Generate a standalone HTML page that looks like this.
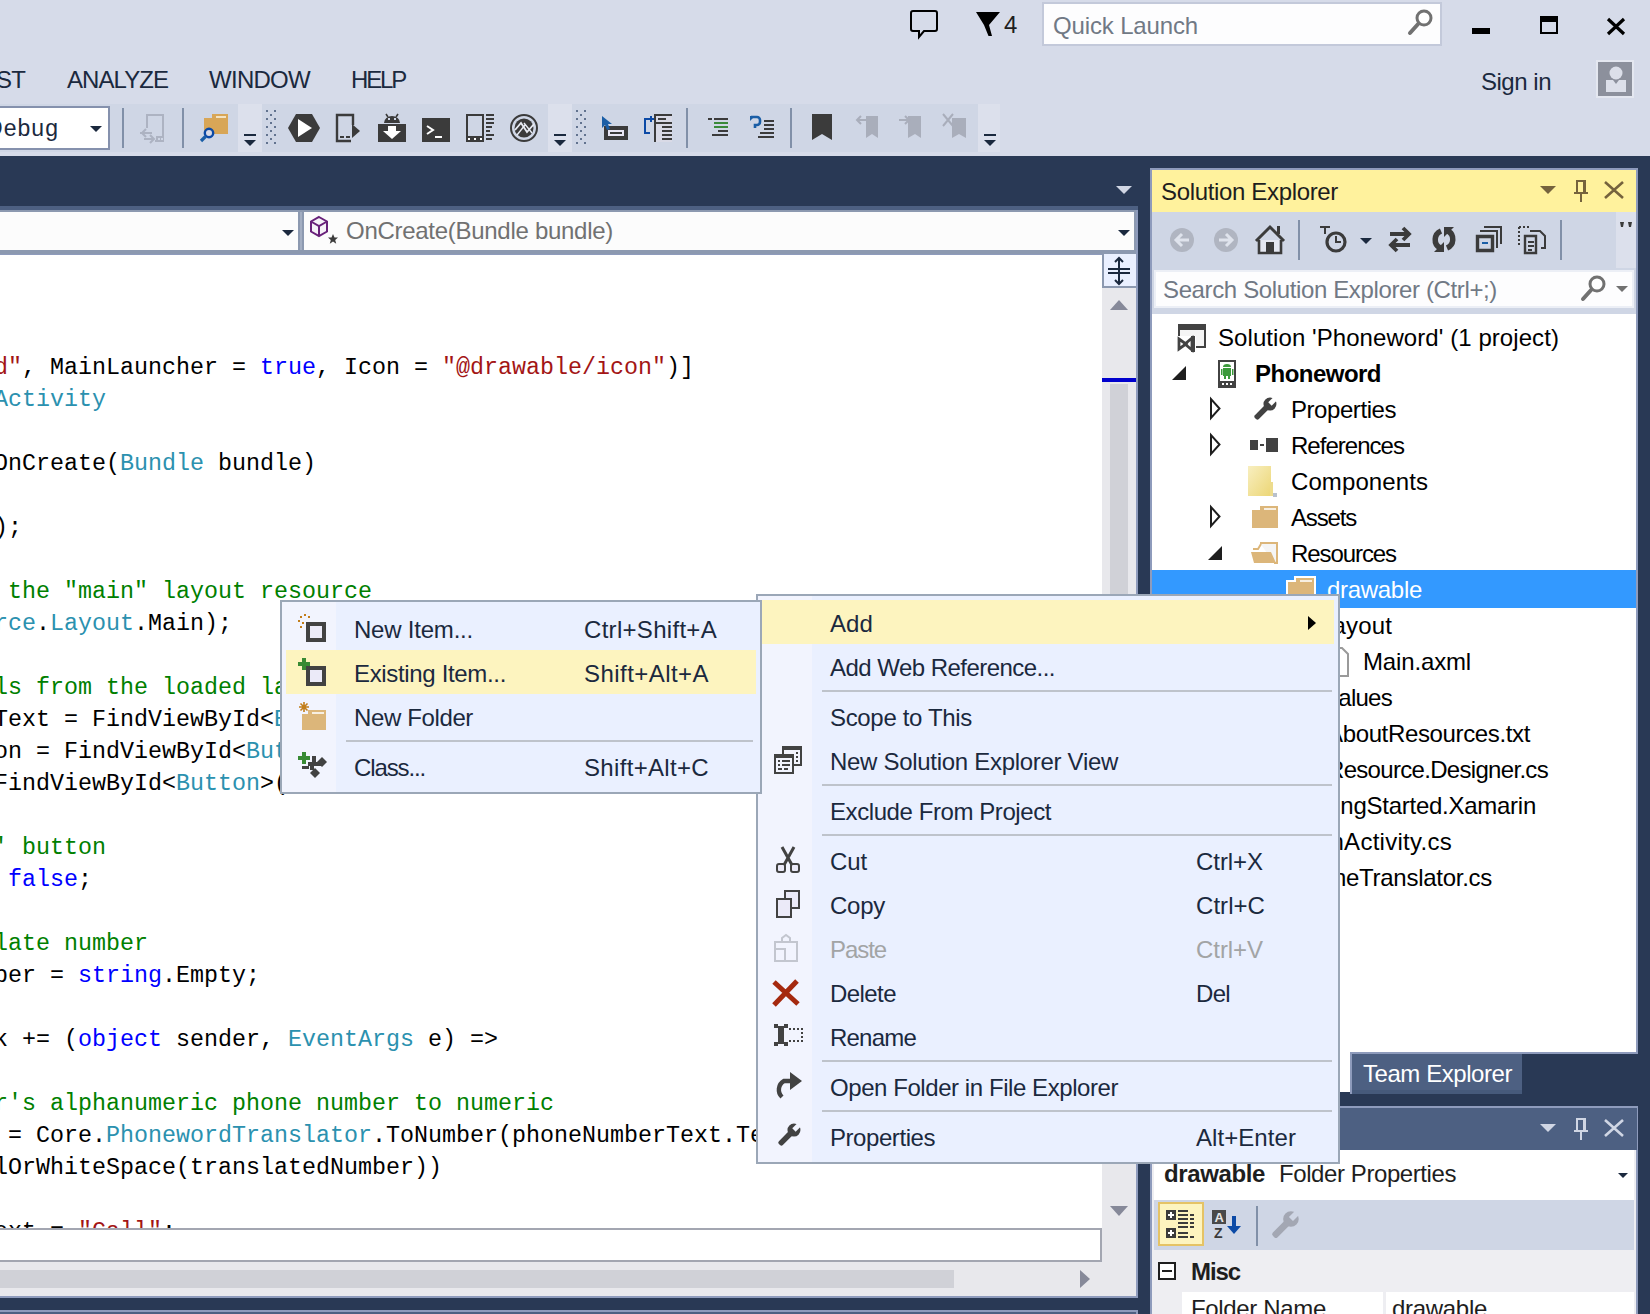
<!DOCTYPE html>
<html><head><meta charset="utf-8"><title>Visual Studio</title>
<style>
html,body{margin:0;padding:0;}
body{width:1650px;height:1314px;overflow:hidden;position:relative;background:#d6dbe9;font-family:"Liberation Sans",sans-serif;}
body>div,body>svg,body>span,body>pre{position:absolute;}
.t{white-space:pre;line-height:1;}
.c{margin:0;font-family:"Liberation Mono",monospace;font-size:23.33px;line-height:32px;color:#000;white-space:pre;}
.c i{font-style:normal;}
.k{color:#0000ff}.y{color:#2b91af}.g{color:#008000}.r{color:#a31515}
</style></head><body>
<div style="left:1042px;top:2px;width:400px;height:44px;background:#fdfdfe;border:2px solid #c3c9da;box-sizing:border-box;"></div>
<span class="t" style="left:1053px;top:13.68px;font-size:24px;color:#717985;letter-spacing:-0.147px;">Quick Launch</span>
<span class="t" style="left:-4px;top:67.68px;font-size:24px;color:#1b293e;letter-spacing:-0.836px;">ST</span>
<span class="t" style="left:67px;top:67.68px;font-size:24px;color:#1b293e;letter-spacing:-0.942px;">ANALYZE</span>
<span class="t" style="left:209px;top:67.68px;font-size:24px;color:#1b293e;letter-spacing:-0.719px;">WINDOW</span>
<span class="t" style="left:351px;top:67.68px;font-size:24px;color:#1b293e;letter-spacing:-2.176px;">HELP</span>
<span class="t" style="left:1481px;top:69.68px;font-size:24px;color:#1b293e;letter-spacing:-0.484px;">Sign in</span>
<div style="left:1597px;top:62px;width:37px;height:36px;background:#9a9ca6;"></div>
<div style="left:0px;top:104px;width:238px;height:48px;background:#cfd6e5;"></div>
<div style="left:238px;top:104px;width:24px;height:48px;background:#dce0ec;"></div>
<div style="left:262px;top:104px;width:286px;height:48px;background:#cfd6e5;"></div>
<div style="left:548px;top:104px;width:24px;height:48px;background:#dce0ec;"></div>
<div style="left:572px;top:104px;width:406px;height:48px;background:#cfd6e5;"></div>
<div style="left:978px;top:104px;width:22px;height:48px;background:#dce0ec;"></div>
<div style="left:-4px;top:106px;width:114px;height:44px;background:#ffffff;border:2px solid #8591ad;box-sizing:border-box;"></div>
<span class="t" style="left:-14px;top:116.53px;font-size:23px;color:#1b293e;letter-spacing:1.044px;">Debug</span>
<div style="left:122px;top:108px;width:2px;height:40px;background:#8190a8;"></div>
<div style="left:182px;top:108px;width:2px;height:40px;background:#8190a8;"></div>
<div style="left:686px;top:108px;width:2px;height:40px;background:#8190a8;"></div>
<div style="left:790px;top:108px;width:2px;height:40px;background:#8190a8;"></div>
<div style="left:0px;top:156px;width:1650px;height:1158px;background:#293955;"></div>
<div style="left:0px;top:206px;width:1138px;height:4px;background:#4d6082;"></div>
<div style="left:0px;top:210px;width:1138px;height:1088px;background:#8e9bbc;"></div>
<div style="left:0px;top:210px;width:1136px;height:44px;background:#8c99b0;"></div>
<div style="left:0px;top:212px;width:298px;height:38px;background:#fcfcfc;"></div>
<div style="left:304px;top:212px;width:830px;height:38px;background:#fcfcfc;"></div>
<div style="left:300px;top:212px;width:2px;height:38px;background:#a3aec2;"></div>
<div style="left:0px;top:255px;width:1102px;height:974px;background:#ffffff;"></div>
<pre class="c" style="left:-6px;top:352px;width:1108px;height:877px;overflow:hidden;"><i class="r">d"</i>, MainLauncher = <i class="k">true</i>, Icon = <i class="r">"@drawable/icon"</i>)]
<i class="y">Activity</i>

OnCreate(<i class="y">Bundle</i> bundle)

);

<i class="g"> the "main" layout resource</i>
<i class="y">rce</i>.<i class="y">Layout</i>.Main);

<i class="g">ls from the loaded layout</i>
Text = FindViewById&lt;<i class="y">EditText</i>
on = FindViewById&lt;<i class="y">Button</i>
FindViewById&lt;<i class="y">Button</i>&gt;(

<i class="g">' button</i>
 <i class="k">false</i>;

<i class="g">late number</i>
ber = <i class="k">string</i>.Empty;

k += (<i class="k">object</i> sender, <i class="y">EventArgs</i> e) =&gt;

<i class="g">r's alphanumeric phone number to numeric</i>
 = Core.<i class="y">PhonewordTranslator</i>.ToNumber(phoneNumberText.Te
lOrWhiteSpace(translatedNumber))

ext = <i class="r">"Call"</i>;
</pre>
<div style="left:1102px;top:255px;width:34px;height:974px;background:#e8e8ec;"></div>
<div style="left:1102px;top:254px;width:34px;height:34px;background:#8c99b0;"></div>
<div style="left:1104px;top:254px;width:32px;height:32px;background:#eaf0ff;"></div>
<div style="left:1102px;top:378px;width:34px;height:4px;background:#0000cd;"></div>
<div style="left:1110px;top:384px;width:18px;height:520px;background:#d0d1d7;"></div>
<div style="left:0px;top:1228px;width:1102px;height:34px;background:#ffffff;border:2px solid #a3a6b1;border-left:none;box-sizing:border-box;"></div>
<div style="left:1102px;top:1228px;width:34px;height:68px;background:#e8e8ec;"></div>
<div style="left:0px;top:1262px;width:1102px;height:34px;background:#e8e8ec;"></div>
<div style="left:0px;top:1270px;width:954px;height:18px;background:#d0d1d7;"></div>
<div style="left:0px;top:1296px;width:1138px;height:2px;background:#8e9bbc;"></div>
<div style="left:0px;top:1310px;width:1138px;height:4px;background:#8e9bbc;"></div>
<div style="left:0px;top:1312px;width:1136px;height:2px;background:#4d6082;"></div>
<div style="left:1150px;top:168px;width:488px;height:886px;background:#8e9bbc;"></div>
<div style="left:1152px;top:170px;width:484px;height:42px;background:#fff29d;"></div>
<span class="t" style="left:1161px;top:179.68px;font-size:24px;color:#1e1e1e;letter-spacing:-0.339px;">Solution Explorer</span>
<div style="left:1152px;top:212px;width:484px;height:102px;background:#cfd6e5;"></div>
<div style="left:1154px;top:270px;width:480px;height:38px;background:#fdfdfe;border:2px solid #eceff6;box-sizing:border-box;"></div>
<span class="t" style="left:1163px;top:277.68px;font-size:24px;color:#717985;letter-spacing:-0.368px;">Search Solution Explorer (Ctrl+;)</span>
<div style="left:1152px;top:314px;width:484px;height:738px;background:#ffffff;"></div>
<div style="left:1152px;top:570px;width:484px;height:38px;background:#3399ff;"></div>
<span class="t" style="left:1218px;top:325.68px;font-size:24px;color:#000000;letter-spacing:0.072px;">Solution &#x27;Phoneword&#x27; (1 project)</span>
<span class="t" style="left:1255px;top:361.68px;font-size:24px;color:#000000;font-weight:bold;letter-spacing:-0.519px;">Phoneword</span>
<span class="t" style="left:1291px;top:397.68px;font-size:24px;color:#000000;letter-spacing:-0.439px;">Properties</span>
<span class="t" style="left:1291px;top:433.68px;font-size:24px;color:#000000;letter-spacing:-0.973px;">References</span>
<span class="t" style="left:1291px;top:469.68px;font-size:24px;color:#000000;letter-spacing:0.092px;">Components</span>
<span class="t" style="left:1291px;top:505.68px;font-size:24px;color:#000000;letter-spacing:-1.172px;">Assets</span>
<span class="t" style="left:1291px;top:541.68px;font-size:24px;color:#000000;letter-spacing:-1.080px;">Resources</span>
<span class="t" style="left:1327px;top:577.68px;font-size:24px;color:#ffffff;letter-spacing:-0.301px;">drawable</span>
<span class="t" style="left:1327px;top:613.68px;font-size:24px;color:#000000;letter-spacing:0.159px;">layout</span>
<span class="t" style="left:1363px;top:649.68px;font-size:24px;color:#000000;letter-spacing:-0.151px;">Main.axml</span>
<span class="t" style="left:1327px;top:685.68px;font-size:24px;color:#000000;letter-spacing:-0.729px;">values</span>
<span class="t" style="left:1327px;top:721.68px;font-size:24px;color:#000000;letter-spacing:-0.358px;">AboutResources.txt</span>
<span class="t" style="left:1327px;top:757.68px;font-size:24px;color:#000000;letter-spacing:-0.689px;">Resource.Designer.cs</span>
<span class="t" style="left:1291px;top:793.68px;font-size:24px;color:#000000;letter-spacing:-0.263px;">GettingStarted.Xamarin</span>
<span class="t" style="left:1291px;top:829.68px;font-size:24px;color:#000000;letter-spacing:0.272px;">MainActivity.cs</span>
<span class="t" style="left:1291px;top:865.68px;font-size:24px;color:#000000;letter-spacing:-0.272px;">PhoneTranslator.cs</span>
<div style="left:1152px;top:1052px;width:198px;height:40px;background:#ffffff;"></div>
<div style="left:1350px;top:1052px;width:2px;height:42px;background:#8e9bbc;"></div>
<div style="left:1352px;top:1054px;width:170px;height:40px;background:#4d6082;"></div>
<div style="left:1352px;top:1090px;width:170px;height:4px;background:#465a7b;"></div>
<span class="t" style="left:1363px;top:1061.68px;font-size:24px;color:#ffffff;letter-spacing:-0.441px;">Team Explorer</span>
<div style="left:1150px;top:1106px;width:488px;height:210px;background:#8e9bbc;"></div>
<div style="left:1152px;top:1108px;width:485px;height:42px;background:#4d6082;"></div>
<div style="left:1152px;top:1150px;width:484px;height:164px;background:#eeeef2;"></div>
<div style="left:1154px;top:1150px;width:480px;height:50px;background:#ffffff;"></div>
<span class="t" style="left:1164px;top:1161.68px;font-size:24px;color:#1e1e1e;font-weight:bold;letter-spacing:-0.381px;">drawable</span>
<span class="t" style="left:1279px;top:1161.68px;font-size:24px;color:#1e1e1e;letter-spacing:-0.416px;">Folder Properties</span>
<div style="left:1154px;top:1200px;width:480px;height:50px;background:#cfd6e5;"></div>
<div style="left:1158px;top:1202px;width:46px;height:44px;background:#fdf4bf;border:2px solid #e5c365;box-sizing:border-box;"></div>
<div style="left:1256px;top:1206px;width:2px;height:40px;background:#8190a8;"></div>
<div style="left:1158px;top:1262px;width:18px;height:18px;background:#ffffff;border:2px solid #1e1e1e;box-sizing:border-box;"></div>
<div style="left:1162px;top:1270px;width:10px;height:2px;background:#1e1e1e;"></div>
<span class="t" style="left:1191px;top:1259.68px;font-size:24px;color:#1e1e1e;font-weight:bold;letter-spacing:-1.090px;">Misc</span>
<div style="left:1182px;top:1292px;width:201px;height:22px;background:#ffffff;"></div>
<div style="left:1386px;top:1292px;width:248px;height:22px;background:#ffffff;"></div>
<span class="t" style="left:1191px;top:1296.68px;font-size:24px;color:#1e1e1e;letter-spacing:-0.338px;">Folder Name</span>
<span class="t" style="left:1392px;top:1296.68px;font-size:24px;color:#1e1e1e;letter-spacing:-0.301px;">drawable</span>
<div style="left:756px;top:594px;width:584px;height:570px;background:#eaf0ff;z-index:10;border:2px solid #9ba7b7;box-sizing:border-box;"></div>
<div style="left:758px;top:596px;width:54px;height:566px;background:#f2f4fe;z-index:10;"></div>
<div style="left:762px;top:600px;width:572px;height:44px;background:#fdf4bf;z-index:10;"></div>
<span class="t" style="left:830px;top:611.68px;font-size:24px;color:#1b293e;letter-spacing:0.099px;z-index:10;">Add</span>
<span class="t" style="left:830px;top:655.68px;font-size:24px;color:#1b293e;letter-spacing:-0.534px;z-index:10;">Add Web Reference...</span>
<span class="t" style="left:830px;top:705.68px;font-size:24px;color:#1b293e;letter-spacing:-0.332px;z-index:10;">Scope to This</span>
<span class="t" style="left:830px;top:749.68px;font-size:24px;color:#1b293e;letter-spacing:-0.296px;z-index:10;">New Solution Explorer View</span>
<span class="t" style="left:830px;top:799.68px;font-size:24px;color:#1b293e;letter-spacing:-0.420px;z-index:10;">Exclude From Project</span>
<span class="t" style="left:830px;top:849.68px;font-size:24px;color:#1b293e;letter-spacing:-0.120px;z-index:10;">Cut</span>
<span class="t" style="left:1196px;top:849.68px;font-size:24px;color:#1b293e;letter-spacing:-0.060px;z-index:10;">Ctrl+X</span>
<span class="t" style="left:830px;top:893.68px;font-size:24px;color:#1b293e;letter-spacing:-0.258px;z-index:10;">Copy</span>
<span class="t" style="left:1196px;top:893.68px;font-size:24px;color:#1b293e;letter-spacing:0.055px;z-index:10;">Ctrl+C</span>
<span class="t" style="left:830px;top:937.68px;font-size:24px;color:#a2a4a5;letter-spacing:-1.075px;z-index:10;">Paste</span>
<span class="t" style="left:1196px;top:937.68px;font-size:24px;color:#a2a4a5;letter-spacing:-0.060px;z-index:10;">Ctrl+V</span>
<span class="t" style="left:830px;top:981.68px;font-size:24px;color:#1b293e;letter-spacing:-0.562px;z-index:10;">Delete</span>
<span class="t" style="left:1196px;top:981.68px;font-size:24px;color:#1b293e;letter-spacing:-0.672px;z-index:10;">Del</span>
<span class="t" style="left:830px;top:1025.68px;font-size:24px;color:#1b293e;letter-spacing:-0.786px;z-index:10;">Rename</span>
<span class="t" style="left:830px;top:1075.68px;font-size:24px;color:#1b293e;letter-spacing:-0.434px;z-index:10;">Open Folder in File Explorer</span>
<span class="t" style="left:830px;top:1125.68px;font-size:24px;color:#1b293e;letter-spacing:-0.439px;z-index:10;">Properties</span>
<span class="t" style="left:1196px;top:1125.68px;font-size:24px;color:#1b293e;letter-spacing:0.068px;z-index:10;">Alt+Enter</span>
<div style="left:822px;top:690px;width:510px;height:2px;background:#bec3cb;z-index:10;"></div>
<div style="left:822px;top:784px;width:510px;height:2px;background:#bec3cb;z-index:10;"></div>
<div style="left:822px;top:834px;width:510px;height:2px;background:#bec3cb;z-index:10;"></div>
<div style="left:822px;top:1060px;width:510px;height:2px;background:#bec3cb;z-index:10;"></div>
<div style="left:822px;top:1110px;width:510px;height:2px;background:#bec3cb;z-index:10;"></div>
<svg style="left:1308px;top:616px;z-index:10;" width="8" height="14" viewBox="0 0 8 14"><path d="M0 0L8 7L0 14Z" fill="#000"/></svg>
<div style="left:280px;top:600px;width:482px;height:194px;background:#eaf0ff;z-index:20;border:2px solid #9ba7b7;box-sizing:border-box;"></div>
<div style="left:282px;top:602px;width:54px;height:190px;background:#f2f4fe;z-index:20;"></div>
<div style="left:286px;top:650px;width:470px;height:44px;background:#fdf4bf;z-index:20;"></div>
<span class="t" style="left:354px;top:617.68px;font-size:24px;color:#1b293e;letter-spacing:-0.214px;z-index:20;">New Item...</span>
<span class="t" style="left:584px;top:617.68px;font-size:24px;color:#1b293e;letter-spacing:0.301px;z-index:20;">Ctrl+Shift+A</span>
<span class="t" style="left:354px;top:661.68px;font-size:24px;color:#1b293e;letter-spacing:-0.337px;z-index:20;">Existing Item...</span>
<span class="t" style="left:584px;top:661.68px;font-size:24px;color:#1b293e;letter-spacing:0.447px;z-index:20;">Shift+Alt+A</span>
<span class="t" style="left:354px;top:705.68px;font-size:24px;color:#1b293e;letter-spacing:-0.372px;z-index:20;">New Folder</span>
<span class="t" style="left:354px;top:755.68px;font-size:24px;color:#1b293e;letter-spacing:-1.127px;z-index:20;">Class...</span>
<span class="t" style="left:584px;top:755.68px;font-size:24px;color:#1b293e;letter-spacing:0.327px;z-index:20;">Shift+Alt+C</span>
<div style="left:346px;top:740px;width:407px;height:2px;background:#bec3cb;z-index:20;"></div>
<span class="t" style="left:1004px;top:13.18px;font-size:24px;color:#1e1e1e;">4</span>
<span class="t" style="left:346px;top:218.68px;font-size:24px;color:#717171;letter-spacing:-0.283px;">OnCreate(Bundle bundle)</span>
<div style="left:1616px;top:212px;width:20px;height:56px;background:#dce0ec;"></div>
<svg style="left:0px;top:0px;pointer-events:none;" width="1650" height="1314" viewBox="0 0 1650 1314"><path d="M913 11h22a2 2 0 0 1 2 2v16a2 2 0 0 1 -2 2h-11l-5 6v-6h-6a2 2 0 0 1 -2 -2v-16a2 2 0 0 1 2 -2z" fill="none" stroke="#000" stroke-width="2" /><path d="M976 12h24l-11 13l3 11h-3.5l-4.5 -11z" fill="#000" /><path d="M1410 33l9 -10" fill="none" stroke="#717171" stroke-width="4" stroke-linecap="round"/><circle cx="1424" cy="18" r="7" fill="#fff" stroke="#717171" stroke-width="3"/><rect x="1472" y="28" width="18" height="6" fill="#000"/><rect x="1540" y="16" width="18" height="18" fill="#000"/><rect x="1542" y="22" width="14" height="10" fill="#d6dbe9"/><path d="M1608 19l16 15M1624 19l-16 15" fill="none" stroke="#000" stroke-width="3.2" /><rect x="1596" y="60" width="38" height="38" fill="#e4e7f0"/><rect x="1598" y="62" width="34" height="34" fill="#8c909c"/><circle cx="1616" cy="73" r="6.5" fill="#dcdfe9"/><path d="M1606 80h7l3 4l3 -4h7v12h-20z" fill="#dcdfe9" /><path d="M90 126h12l-6 6z" fill="#1b293e" /><path d="M147 128v-13h16v26h-8" fill="none" stroke="#adb3c2" stroke-width="2" /><rect x="156" y="136" width="8" height="6" fill="#adb3c2"/><rect x="158" y="138" width="2" height="2" fill="#cfd6e5"/><rect x="161" y="138" width="2" height="2" fill="#cfd6e5"/><rect x="140" y="132" width="12" height="2" fill="#adb3c2"/><path d="M146 129l-4 4l4 4" fill="none" stroke="#adb3c2" stroke-width="2" /><rect x="144" y="138" width="10" height="2" fill="#adb3c2"/><path d="M150 135l4 4l-4 4" fill="none" stroke="#adb3c2" stroke-width="2" /><rect x="204" y="118" width="24" height="16" fill="#d8a657"/><rect x="212" y="114" width="16" height="5" fill="#d8a657"/><rect x="216" y="116" width="10" height="2" fill="#f3e3c4"/><circle cx="209" cy="133" r="4.2" fill="#d9dae6" stroke="#0c4aa6" stroke-width="2.4"/><path d="M205.5 136.5l-4.5 4.5" fill="none" stroke="#1a5ea6" stroke-width="3.2" /><rect x="244" y="134" width="12" height="2" fill="#1b293e"/><path d="M244 140h12l-6 6z" fill="#1b293e" /><rect x="554" y="134" width="12" height="2" fill="#1b293e"/><path d="M554 140h12l-6 6z" fill="#1b293e" /><rect x="984" y="134" width="12" height="2" fill="#1b293e"/><path d="M984 140h12l-6 6z" fill="#1b293e" /><rect x="266" y="110" width="2" height="2" fill="#62738f"/><rect x="274" y="110" width="2" height="2" fill="#62738f"/><rect x="270" y="114" width="2" height="2" fill="#62738f"/><rect x="266" y="118" width="2" height="2" fill="#62738f"/><rect x="274" y="118" width="2" height="2" fill="#62738f"/><rect x="270" y="122" width="2" height="2" fill="#62738f"/><rect x="266" y="126" width="2" height="2" fill="#62738f"/><rect x="274" y="126" width="2" height="2" fill="#62738f"/><rect x="270" y="130" width="2" height="2" fill="#62738f"/><rect x="266" y="134" width="2" height="2" fill="#62738f"/><rect x="274" y="134" width="2" height="2" fill="#62738f"/><rect x="270" y="138" width="2" height="2" fill="#62738f"/><rect x="266" y="142" width="2" height="2" fill="#62738f"/><rect x="274" y="142" width="2" height="2" fill="#62738f"/><rect x="576" y="110" width="2" height="2" fill="#62738f"/><rect x="584" y="110" width="2" height="2" fill="#62738f"/><rect x="580" y="114" width="2" height="2" fill="#62738f"/><rect x="576" y="118" width="2" height="2" fill="#62738f"/><rect x="584" y="118" width="2" height="2" fill="#62738f"/><rect x="580" y="122" width="2" height="2" fill="#62738f"/><rect x="576" y="126" width="2" height="2" fill="#62738f"/><rect x="584" y="126" width="2" height="2" fill="#62738f"/><rect x="580" y="130" width="2" height="2" fill="#62738f"/><rect x="576" y="134" width="2" height="2" fill="#62738f"/><rect x="584" y="134" width="2" height="2" fill="#62738f"/><rect x="580" y="138" width="2" height="2" fill="#62738f"/><rect x="576" y="142" width="2" height="2" fill="#62738f"/><rect x="584" y="142" width="2" height="2" fill="#62738f"/><path d="M288 128l8 -14h16l8 14l-8 14h-16z" fill="#3b3b3b" /><path d="M298 119v18l14 -9z" fill="#fff" /><path d="M353 125v-10h-16v26h14" fill="none" stroke="#3b3b3b" stroke-width="2.4" /><rect x="340" y="136" width="4" height="2" fill="#3b3b3b"/><rect x="346" y="136" width="4" height="2" fill="#3b3b3b"/><path d="M352 124l8 7l-8 7z" fill="#3b3b3b" /><rect x="378" y="124" width="28" height="18" fill="#3b3b3b"/><path d="M384 123a8 7 0 0 1 16 0z" fill="#3b3b3b" /><path d="M386 114l2 3M398 114l-2 3" fill="none" stroke="#3b3b3b" stroke-width="1.6" /><rect x="388" y="118" width="2" height="2" fill="#cfd6e5"/><rect x="394" y="118" width="2" height="2" fill="#cfd6e5"/><path d="M388 126h8v5h5l-9 8l-9 -8h5z" fill="#fff" /><rect x="422" y="118" width="28" height="24" fill="#3b3b3b"/><path d="M427 126l6 4l-6 4" fill="none" stroke="#fff" stroke-width="2" /><rect x="435" y="136" width="7" height="2" fill="#fff"/><path d="M467 115h16v26h-16z" fill="none" stroke="#3b3b3b" stroke-width="2" /><rect x="466" y="136" width="18" height="6" fill="#3b3b3b"/><rect x="468" y="138" width="2" height="2" fill="#fff"/><rect x="474" y="138" width="2" height="2" fill="#fff"/><rect x="480" y="138" width="2" height="2" fill="#fff"/><rect x="486" y="114" width="8" height="2" fill="#3b3b3b"/><rect x="486" y="118" width="8" height="2" fill="#3b3b3b"/><rect x="486" y="122" width="8" height="2" fill="#3b3b3b"/><rect x="486" y="126" width="6" height="2" fill="#3b3b3b"/><rect x="486" y="130" width="4" height="2" fill="#3b3b3b"/><rect x="486" y="134" width="8" height="2" fill="#3b3b3b"/><rect x="486" y="138" width="6" height="2" fill="#3b3b3b"/><circle cx="524" cy="128" r="13" fill="none" stroke="#3b3b3b" stroke-width="2"/><circle cx="524" cy="128" r="9.5" fill="#3b3b3b"/><path d="M515 130l6 -7l6 9l7 -8" fill="none" stroke="#e8ebf3" stroke-width="1.8" /><path d="M517 135l8 -10M524 123l8 10" fill="none" stroke="#e8ebf3" stroke-width="1.4" /><rect x="604" y="126" width="24" height="14" fill="#3b3b3b"/><rect x="608" y="130" width="16" height="6" fill="#e8e6f4"/><rect x="610" y="132" width="12" height="2" fill="#3b3b3b"/><path d="M602 116l10 8h-4l2 5l-3 1l-2 -5l-3 3z" fill="#1a5ea6" /><rect x="656" y="116" width="16" height="26" fill="#d9dae6"/><rect x="644" y="118" width="2" height="16" fill="#0c4aa6"/><rect x="644" y="118" width="10" height="2" fill="#0c4aa6"/><rect x="644" y="132" width="6" height="2" fill="#0c4aa6"/><rect x="650" y="116" width="2" height="6" fill="#0c4aa6"/><rect x="654" y="114" width="2" height="28" fill="#3b3b3b"/><rect x="654" y="114" width="18" height="2" fill="#3b3b3b"/><rect x="654" y="122" width="18" height="2" fill="#3b3b3b"/><rect x="658" y="118" width="8" height="2" fill="#3b3b3b"/><rect x="662" y="126" width="10" height="2" fill="#3b3b3b"/><rect x="662" y="130" width="10" height="2" fill="#3b3b3b"/><rect x="662" y="134" width="10" height="2" fill="#3b3b3b"/><rect x="662" y="138" width="10" height="2" fill="#3b3b3b"/><rect x="708" y="118" width="4" height="2" fill="#3b3b3b"/><rect x="714" y="118" width="14" height="2" fill="#3b3b3b"/><rect x="714" y="122" width="14" height="2" fill="#3a8a3a"/><rect x="714" y="126" width="14" height="2" fill="#3a8a3a"/><rect x="718" y="130" width="10" height="2" fill="#3b3b3b"/><rect x="712" y="134" width="16" height="2" fill="#3b3b3b"/><path d="M751 117h6a3 3 0 0 1 3 3v2a3 3 0 0 1 -3 3h-2v3" fill="none" stroke="#1a5ea6" stroke-width="2.6" /><path d="M750 116l5 0l-5 5z" fill="#1a5ea6" /><rect x="764" y="120" width="10" height="2" fill="#3b3b3b"/><rect x="764" y="124" width="10" height="2" fill="#3b3b3b"/><rect x="764" y="128" width="10" height="2" fill="#3b3b3b"/><rect x="760" y="132" width="14" height="2" fill="#3b3b3b"/><rect x="758" y="136" width="16" height="2" fill="#3b3b3b"/><path d="M812 114h20v26l-10 -6l-10 6z" fill="#3b3b3b" /><path d="M866 116h12v22l-6 -4l-6 4z" fill="#a9aebb" /><path d="M857 120h10M861 116l-4 4l4 4" fill="none" stroke="#a9aebb" stroke-width="2" /><path d="M908 116h13v22l-6 -4l-7 4z" fill="#a9aebb" /><path d="M899 120h10M905 116l4 4l-4 4" fill="none" stroke="#a9aebb" stroke-width="2" /><path d="M952 118h14v20l-7 -4l-7 4z" fill="#a9aebb" /><path d="M943 114l10 12M953 114l-10 12" fill="none" stroke="#a9aebb" stroke-width="2" /><path d="M282 230h12l-6 6z" fill="#1b293e" /><path d="M1118 230h12l-6 6z" fill="#1b293e" /><path d="M1116 186h16l-8 8z" fill="#d0d6e4" /><path d="M319 217l8 4.5v10l-8 4.5l-8 -4.5v-10z" fill="#f6f2f8" stroke="#68217a" stroke-width="2" /><path d="M311 221.5l8 4.5l8 -4.5M319 226v10" fill="none" stroke="#68217a" stroke-width="2" /><path d="M333 234l1.5 3.5h3.5l-2.8 2.4l1 3.8l-3.2 -2.2l-3.2 2.2l1 -3.8l-2.8 -2.4h3.5z" fill="#3b3b3b" /><rect x="1118" y="259" width="2" height="24" fill="#1b293e"/><rect x="1108" y="268" width="22" height="2" fill="#1b293e"/><rect x="1108" y="272" width="22" height="2" fill="#1b293e"/><path d="M1115 262l4 -4l4 4M1115 280l4 4l4 -4" fill="none" stroke="#1b293e" stroke-width="2" /><path d="M1110 310l9 -10l9 10z" fill="#868999" /><path d="M1110 1206l9 10l9 -10z" fill="#868999" /><path d="M1080 1270v18l10 -9z" fill="#868999" /><path d="M1540 186h16l-8 8z" fill="#75633d" /><path d="M1577 181h8v12h-8z" fill="none" stroke="#75633d" stroke-width="2" /><rect x="1583" y="181" width="2" height="12" fill="#75633d"/><rect x="1574" y="192" width="14" height="2" fill="#75633d"/><rect x="1580" y="194" width="2" height="8" fill="#75633d"/><path d="M1605 182l18 16M1623 182l-18 16" fill="none" stroke="#75633d" stroke-width="2.6" /><circle cx="1182" cy="240" r="12" fill="#b0b5c1"/><path d="M1189 240h-12M1182 234l-6 6l6 6" fill="none" stroke="#dfe3ec" stroke-width="3" /><circle cx="1226" cy="240" r="12" fill="#b0b5c1"/><path d="M1219 240h12M1226 234l6 6l-6 6" fill="none" stroke="#dfe3ec" stroke-width="3" /><path d="M1256 241l14 -14l14 14" fill="none" stroke="#3b3b3b" stroke-width="3" /><rect x="1277" y="226" width="3" height="8" fill="#3b3b3b"/><path d="M1259 240v13h22v-13" fill="#e4e7f0" stroke="#3b3b3b" stroke-width="2.6" /><rect x="1266" y="242" width="8" height="11" fill="#3b3b3b"/><rect x="1298" y="220" width="2" height="40" fill="#8190a8"/><rect x="1560" y="220" width="2" height="40" fill="#8190a8"/><rect x="1320" y="226" width="10" height="2" fill="#3b3b3b"/><rect x="1324" y="228" width="2" height="6" fill="#3b3b3b"/><circle cx="1336" cy="242" r="9" fill="none" stroke="#3b3b3b" stroke-width="3.2"/><path d="M1336 236v6h5" fill="none" stroke="#3b3b3b" stroke-width="2" /><path d="M1360 238h12l-6 6z" fill="#1b293e" /><path d="M1390 234h18M1403 228l6 6l-6 6" fill="none" stroke="#3b3b3b" stroke-width="3.8" /><path d="M1410 245h-18M1397 239l-6 6l6 6" fill="none" stroke="#3b3b3b" stroke-width="3.8" /><path d="M1441 231a9.5 9.5 0 0 0 -1 17" fill="none" stroke="#3b3b3b" stroke-width="5.5" /><path d="M1447 248a9.5 9.5 0 0 0 1 -17" fill="none" stroke="#3b3b3b" stroke-width="5.5" /><path d="M1434 252h10v-10z" fill="#3b3b3b" /><path d="M1454 227h-10v10z" fill="#3b3b3b" /><path d="M1484 227h17v17" fill="none" stroke="#3b3b3b" stroke-width="2" /><path d="M1480 231h17v17" fill="none" stroke="#3b3b3b" stroke-width="2" /><path d="M1477.5 236.5h15v14h-15z" fill="none" stroke="#3b3b3b" stroke-width="3.4" /><rect x="1482" y="242" width="6" height="2" fill="#1a5ea6"/><path d="M1519 227h10M1519 227v18" fill="none" stroke="#3b3b3b" stroke-width="2" stroke-dasharray="2 2"/><path d="M1530 231h10l5 5v12h-4" fill="none" stroke="#3b3b3b" stroke-width="2" /><path d="M1525 236h11v17h-11z" fill="none" stroke="#3b3b3b" stroke-width="2.4" /><rect x="1528" y="241" width="6" height="2" fill="#3b3b3b"/><rect x="1528" y="245" width="6" height="2" fill="#3b3b3b"/><rect x="1528" y="249" width="4" height="2" fill="#3b3b3b"/><path d="M1620 222h4l-1 5h-2zM1628 222h4l-1 5h-2z" fill="#3b3b3b" /><path d="M1583 299l9 -10" fill="none" stroke="#717171" stroke-width="4" stroke-linecap="round"/><circle cx="1597" cy="284" r="7" fill="#fff" stroke="#717171" stroke-width="3"/><path d="M1616 286h12l-6 6z" fill="#717171" /><rect x="1178" y="324" width="28" height="24" fill="#f5f5f5"/><rect x="1178" y="324" width="28" height="6" fill="#424242"/><rect x="1204" y="324" width="2" height="24" fill="#424242"/><rect x="1196" y="346" width="10" height="2" fill="#424242"/><rect x="1178" y="330" width="2" height="6" fill="#424242"/><rect x="1176" y="336" width="20" height="16" fill="#ffffff"/><path d="M1179 339l7 5l-7 5zM1192 338v12l-7 -6z" fill="none" stroke="#424242" stroke-width="2.8" /><rect x="1191" y="336" width="4" height="16" fill="#424242"/><path d="M1186 366v14h-14z" fill="#1e1e1e" /><path d="M1211 399v19l8.5 -9.5z" fill="none" stroke="#1e1e1e" stroke-width="2" /><path d="M1211 435v19l8.5 -9.5z" fill="none" stroke="#1e1e1e" stroke-width="2" /><path d="M1211 507v19l8.5 -9.5z" fill="none" stroke="#1e1e1e" stroke-width="2" /><path d="M1222 546v14h-14z" fill="#1e1e1e" /><path d="M1219 361h16v26h-16z" fill="#fff" stroke="#424242" stroke-width="2" /><rect x="1219" y="381" width="16" height="6" fill="#424242"/><rect x="1222" y="383" width="2" height="2" fill="#fff"/><rect x="1226" y="383" width="2" height="2" fill="#fff"/><rect x="1230" y="383" width="2" height="2" fill="#fff"/><rect x="1223" y="368" width="8" height="8" fill="#3c9a3c"/><rect x="1221" y="369" width="1.5" height="6" fill="#3c9a3c"/><rect x="1232" y="369" width="1.5" height="6" fill="#3c9a3c"/><rect x="1224" y="376" width="2" height="3" fill="#3c9a3c"/><rect x="1228" y="376" width="2" height="3" fill="#3c9a3c"/><path d="M1223 367a4 3 0 0 1 8 0z" fill="#3c9a3c" /><g transform="translate(1265,409) rotate(45)"><circle cx="0" cy="-7" r="6.5" fill="#424242"/><rect x="-2.8" y="-4" width="5.6" height="17.5" rx="2" fill="#424242"/><rect x="-2.4" y="-15" width="4.8" height="8" fill="#fff"/></g><rect x="1250" y="440" width="8" height="10" fill="#424242"/><rect x="1260" y="444" width="4" height="2" fill="#424242"/><rect x="1266" y="438" width="12" height="14" fill="#424242"/><defs><linearGradient id="yf" x1="0" y1="0" x2="1" y2="1"><stop offset="0" stop-color="#f8efc0"/><stop offset="1" stop-color="#ecd676"/></linearGradient></defs><rect x="1248" y="466" width="23" height="30" fill="url(#yf)"/><rect x="1270" y="482" width="3" height="14" fill="#eddc8e"/><rect x="1273" y="493" width="4" height="4" fill="#b9c1cd"/><rect x="1252" y="510" width="26" height="18" fill="#dcb67a"/><rect x="1260" y="506" width="18" height="5" fill="#dcb67a"/><rect x="1264" y="508" width="12" height="2" fill="#f7efe2"/><path d="M1260 543h17v20h-3" fill="#f5f5f5" stroke="#dcb67a" stroke-width="2" /><path d="M1253 549h5l3 -5" fill="none" stroke="#dcb67a" stroke-width="2" /><path d="M1251 552h20l5 11h-22z" fill="#dcb67a" /><rect x="1286" y="580" width="30" height="28" fill="#fff"/><rect x="1294" y="576" width="22" height="6" fill="#fff"/><rect x="1288" y="582" width="26" height="18" fill="#dcb67a"/><rect x="1296" y="578" width="18" height="5" fill="#dcb67a"/><rect x="1300" y="580" width="12" height="2" fill="#f7efe2"/><rect x="1288" y="600" width="26" height="8" fill="#dcb67a"/><path d="M1334 648h8l6 6v22h-14z" fill="#fff" stroke="#9a9a9a" stroke-width="2" /><path d="M1540 1124h16l-8 8z" fill="#d0d6e4" /><path d="M1577 1119h8v12h-8z" fill="none" stroke="#d0d6e4" stroke-width="2" /><rect x="1583" y="1119" width="2" height="12" fill="#d0d6e4"/><rect x="1574" y="1130" width="14" height="2" fill="#d0d6e4"/><rect x="1580" y="1132" width="2" height="8" fill="#d0d6e4"/><path d="M1605 1120l18 16M1623 1120l-18 16" fill="none" stroke="#d0d6e4" stroke-width="2.6" /><path d="M1618 1173h10l-5 5z" fill="#1b293e" /><rect x="1166" y="1210" width="10" height="10" fill="#3b3b3b"/><rect x="1168" y="1214" width="6" height="2" fill="#fff"/><rect x="1170" y="1212" width="2" height="6" fill="#fff"/><rect x="1166" y="1228" width="10" height="10" fill="#3b3b3b"/><rect x="1168" y="1232" width="6" height="2" fill="#fff"/><rect x="1170" y="1230" width="2" height="6" fill="#fff"/><rect x="1178" y="1210" width="10" height="2" fill="#3b3b3b"/><rect x="1178" y="1214" width="10" height="2" fill="#3b3b3b"/><rect x="1190" y="1214" width="4" height="2" fill="#3b3b3b"/><rect x="1178" y="1218" width="10" height="2" fill="#3b3b3b"/><rect x="1190" y="1218" width="4" height="2" fill="#3b3b3b"/><rect x="1178" y="1222" width="10" height="2" fill="#3b3b3b"/><rect x="1190" y="1222" width="4" height="2" fill="#3b3b3b"/><rect x="1178" y="1226" width="10" height="2" fill="#3b3b3b"/><rect x="1190" y="1226" width="4" height="2" fill="#3b3b3b"/><rect x="1178" y="1232" width="10" height="2" fill="#3b3b3b"/><rect x="1178" y="1236" width="10" height="2" fill="#3b3b3b"/><rect x="1190" y="1236" width="4" height="2" fill="#3b3b3b"/><rect x="1212" y="1210" width="14" height="14" fill="#4a4a4a"/><text x="1214.5" y="1222" font-family="Liberation Sans" font-weight="bold" font-size="13" fill="#e8e8e8">A</text><text x="1214" y="1238" font-family="Liberation Sans" font-weight="bold" font-size="14" fill="#3b3b3b">Z</text><rect x="1232" y="1216" width="4" height="14" fill="#0c4aa6"/><path d="M1227 1226h14l-7 8z" fill="#0c4aa6" /><g transform="translate(1285,1225) rotate(45) scale(1.2)"><circle cx="0" cy="-7" r="6.5" fill="#a3a7b3"/><rect x="-2.8" y="-4" width="5.6" height="17.5" rx="2" fill="#a3a7b3"/><rect x="-2.4" y="-15" width="4.8" height="8" fill="#cfd6e5"/></g></svg>
<svg style="left:0px;top:0px;z-index:30;pointer-events:none;" width="1650" height="1314" viewBox="0 0 1650 1314"><path d="M308 624h16v16h-16z" fill="#ebeaf8" stroke="#424242" stroke-width="4" /><rect x="300" y="616" width="2" height="2" fill="#c27d1a"/><rect x="304" y="614" width="2" height="2" fill="#c27d1a"/><rect x="308" y="616" width="2" height="2" fill="#c27d1a"/><rect x="298" y="620" width="2" height="2" fill="#c27d1a"/><rect x="302" y="622" width="2" height="2" fill="#c27d1a"/><rect x="300" y="626" width="2" height="2" fill="#c27d1a"/><path d="M308 668h16v16h-16z" fill="#ebeaf8" stroke="#424242" stroke-width="4" /><rect x="302" y="658" width="4" height="12" fill="#388a34"/><rect x="298" y="662" width="12" height="4" fill="#388a34"/><rect x="302" y="714" width="24" height="16" fill="#dcb67a"/><rect x="308" y="710" width="18" height="5" fill="#dcb67a"/><rect x="312" y="712" width="12" height="2" fill="#f7efe2"/><path d="M304 702v10M299 707h10M300.5 703.5l7 7M307.5 703.5l-7 7" fill="none" stroke="#c27d1a" stroke-width="1.6" /><rect x="302" y="752" width="4" height="12" fill="#388a34"/><rect x="298" y="756" width="12" height="4" fill="#388a34"/><rect x="308" y="762" width="14" height="4" fill="#424242"/><path d="M322 757l5 5l-5 5l-5 -5z" fill="#424242" /><path d="M315 768l5 5l-5 5l-5 -5z" fill="#424242" /><rect x="310" y="764" width="4" height="6" fill="#424242"/><rect x="302" y="766" width="7" height="3" fill="#424242"/><rect x="312" y="756" width="4" height="6" fill="#424242"/><rect x="782" y="746" width="20" height="20" fill="#424242"/><rect x="784" y="750" width="16" height="14" fill="#f2f4fe"/><rect x="796" y="752" width="2" height="2" fill="#424242"/><rect x="796" y="756" width="2" height="2" fill="#424242"/><rect x="796" y="760" width="2" height="2" fill="#424242"/><rect x="774" y="754" width="20" height="20" fill="#424242"/><rect x="776" y="758" width="16" height="14" fill="#f2f4fe"/><rect x="778" y="760" width="2" height="2" fill="#424242"/><rect x="782" y="760" width="8" height="2" fill="#424242"/><rect x="778" y="764" width="2" height="2" fill="#424242"/><rect x="782" y="764" width="8" height="2" fill="#424242"/><rect x="778" y="768" width="4" height="2" fill="#424242"/><rect x="784" y="768" width="4" height="2" fill="#424242"/><path d="M782 847l10 18M794 847l-10 18" fill="none" stroke="#424242" stroke-width="3" /><rect x="777" y="864" width="8" height="8" rx="2" fill="#ebeaf8" stroke="#424242" stroke-width="2"/><rect x="791" y="864" width="8" height="8" rx="2" fill="#ebeaf8" stroke="#424242" stroke-width="2"/><path d="M785 891h14v17h-14z" fill="#ebeaf8" stroke="#424242" stroke-width="2" /><path d="M777 899h14v18h-14z" fill="#ebeaf8" stroke="#424242" stroke-width="2" /><path d="M775 942h22v19h-22z" fill="none" stroke="#c3c6cf" stroke-width="2" /><path d="M782 942v-4l4 -3l4 3v4" fill="none" stroke="#c3c6cf" stroke-width="2" /><path d="M776 949h9v12" fill="none" stroke="#c3c6cf" stroke-width="2" /><path d="M774 982l24 22M797 981l-23 24" fill="none" stroke="#a5290f" stroke-width="5" /><rect x="774" y="1024" width="4" height="4" fill="#424242"/><rect x="784" y="1024" width="4" height="4" fill="#424242"/><rect x="778" y="1026" width="6" height="18" fill="#424242"/><rect x="774" y="1042" width="4" height="4" fill="#424242"/><rect x="784" y="1042" width="4" height="4" fill="#424242"/><path d="M789 1029h13v12h-13" fill="none" stroke="#424242" stroke-width="2" stroke-dasharray="2 2"/><path d="M782 1097a10 10 0 0 1 2 -16h12" fill="none" stroke="#424242" stroke-width="4.4" /><path d="M790 1072l12 9l-12 9z" fill="#424242" /><g transform="translate(789,1135) rotate(45)"><circle cx="0" cy="-7" r="6.5" fill="#424242"/><rect x="-2.8" y="-4" width="5.6" height="17.5" rx="2" fill="#424242"/><rect x="-2.4" y="-15" width="4.8" height="8" fill="#f2f4fe"/></g></svg>
</body></html>
